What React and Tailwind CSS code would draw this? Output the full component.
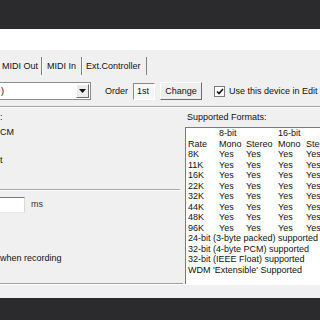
export default function App() {
  const rates = ["8K", "11K", "16K", "22K", "32K", "44K", "48K", "96K"];
  return (
    <div className="w-[320px] h-[320px] overflow-hidden flex flex-col text-[9px] leading-[10.5px] text-[#111] font-['Liberation_Sans',Arial,sans-serif]">
      <div className="h-[29px] shrink-0 bg-[#2b2b2d]" />
      <div className="h-[21px] shrink-0 bg-white" />
      <div className="h-[248px] shrink-0 bg-[#f0f0f0] flex flex-col">
        {/* tabs */}
        <div className="mt-[7px] h-[18px] flex items-stretch">
          <div className="w-[42px] shrink-0 pl-[2px] flex items-center border-r border-[#7f7f7f] whitespace-nowrap">MIDI Out</div>
          <div className="w-[40px] shrink-0 pl-[4px] flex items-center border-l border-white border-r border-r-[#7f7f7f] whitespace-nowrap">MIDI In</div>
          <div className="w-[65px] shrink-0 pl-[3px] flex items-center border-l border-white border-r border-r-[#7f7f7f] whitespace-nowrap">Ext.Controller</div>
        </div>
        {/* device row */}
        <div className="mt-[7px] h-[18px] flex items-center overflow-hidden">
          <div className="w-[91px] shrink-0 h-[18px] bg-white border-y border-r border-[#8c8c8c] flex items-center justify-between">
            <span className="pl-[1px]">)</span>
            <div className="w-[13px] h-[14px] mr-[1px] bg-[#ececec] border border-t-white border-l-white border-b-[#6b6b6b] border-r-[#6b6b6b] flex items-center justify-center">
              <svg width="7" height="4" viewBox="0 0 7 4"><path d="M0 0h7L3.5 4z" fill="#111" /></svg>
            </div>
          </div>
          <span className="ml-[14px] shrink-0">Order</span>
          <div className="ml-[5px] shrink-0 w-[22px] h-[17px] bg-[#f7f7f7] border border-t-[#8a8a8a] border-l-[#8a8a8a] border-b-white border-r-white flex items-center pl-[3px]">1st</div>
          <div className="ml-[5px] shrink-0 w-[42px] h-[18px] bg-[#efefef] border border-t-white border-l-white border-b-[#6b6b6b] border-r-[#6b6b6b] flex items-center justify-center">Change</div>
          <div className="ml-[12px] shrink-0 w-[11px] h-[11px] bg-white border border-[#7a7a7a] flex items-center justify-center">
            <svg width="8" height="7" viewBox="0 0 8 7"><path d="M1 3.5l2 2L7 1" stroke="#111" strokeWidth="1.6" fill="none" /></svg>
          </div>
          <span className="ml-[4px] shrink-0 whitespace-nowrap">Use this device in Edit Window</span>
        </div>
        {/* separator */}
        <div className="mt-[6px] h-[2px] border-t border-[#a0a0a0] border-b border-b-white" />
        {/* content */}
        <div className="h-[176px] flex">
          <div className="w-[185px] shrink-0 flex flex-col">
            <div className="mr-[2px] flex-1 flex flex-col border-b border-[#a0a0a0]">
              <span className="mt-[4px]">:</span>
              <span className="mt-[4.5px]">CM</span>
              <span className="mt-[17.5px]">t</span>
              <div className="mt-[23px] mr-[3px] h-[2px] border-t border-[#a8a8a8] border-b border-b-white" />
              <div className="mt-[6px] flex items-center">
                <div className="w-[25px] h-[16px] bg-white border-t border-r border-b border-t-[#7a7a7a] border-r-[#d8d8d8] border-b-[#e8e8e8]" />
                <span className="ml-[6px] text-[#333]">ms</span>
              </div>
              <span className="mt-[40px] whitespace-nowrap">when recording</span>
            </div>
          </div>
          <div className="flex-1 flex flex-col min-w-0">
            <span className="mt-[4px] pl-[2px] whitespace-nowrap">Supported Formats:</span>
            <div className="mt-[4.5px] flex-1 bg-white border-l border-t border-[#7a7a7a] pl-[2px] overflow-hidden">
              <div className="grid grid-cols-[31px_27px_32px_28px_40px] whitespace-nowrap">
                <span />
                <span>8-bit</span>
                <span />
                <span>16-bit</span>
                <span />
                <span>Rate</span>
                <span>Mono</span>
                <span>Stereo</span>
                <span>Mono</span>
                <span>Stereo</span>
                {rates.map((r) => [
                  <span key={r + "a"}>{r}</span>,
                  <span key={r + "b"}>Yes</span>,
                  <span key={r + "c"}>Yes</span>,
                  <span key={r + "d"}>Yes</span>,
                  <span key={r + "e"}>Yes</span>,
                ])}
              </div>
              <div className="whitespace-nowrap">24-bit (3-byte packed) supported</div>
              <div className="whitespace-nowrap">32-bit (4-byte PCM) supported</div>
              <div className="whitespace-nowrap">32-bit (IEEE Float) supported</div>
              <div className="whitespace-nowrap">WDM 'Extensible' Supported</div>
            </div>
          </div>
        </div>
        <div className="flex-1 border-t border-white" />
      </div>
      <div className="flex-1 bg-[#2b2b2d]" />
    </div>
  );
}
